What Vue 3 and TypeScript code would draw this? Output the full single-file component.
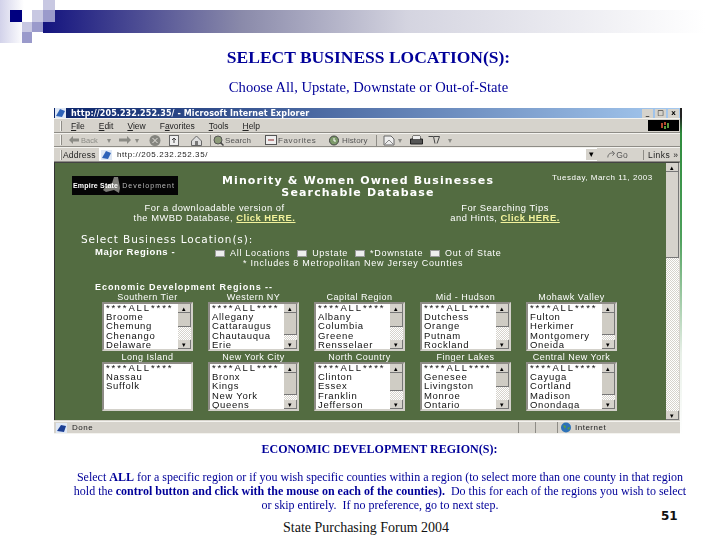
<script setup lang="ts">
interface Region { name: string; items: string[]; thumb: number; scroll: boolean }
const top: Region[] = [
  { name: 'Southern Tier', items: ['Broome', 'Chemung', 'Chenango', 'Delaware'], thumb: 14, scroll: true },
  { name: 'Western NY', items: ['Allegany', 'Cattaraugus', 'Chautauqua', 'Erie'], thumb: 22, scroll: true },
  { name: 'Capital Region', items: ['Albany', 'Columbia', 'Greene', 'Rensselaer'], thumb: 14, scroll: true },
  { name: 'Mid - Hudson', items: ['Dutchess', 'Orange', 'Putnam', 'Rockland'], thumb: 14, scroll: true },
  { name: 'Mohawk Valley', items: ['Fulton', 'Herkimer', 'Montgomery', 'Oneida'], thumb: 22, scroll: true },
]
const bottom: Region[] = [
  { name: 'Long Island', items: ['Nassau', 'Suffolk'], thumb: 0, scroll: false },
  { name: 'New York City', items: ['Bronx', 'Kings', 'New York', 'Queens'], thumb: 22, scroll: true },
  { name: 'North Country', items: ['Clinton', 'Essex', 'Franklin', 'Jefferson'], thumb: 18, scroll: true },
  { name: 'Finger Lakes', items: ['Genesee', 'Livingston', 'Monroe', 'Ontario'], thumb: 14, scroll: true },
  { name: 'Central New York', items: ['Cayuga', 'Cortland', 'Madison', 'Onondaga'], thumb: 22, scroll: true },
]
const rows = [top, bottom]
const menus = [
  ['', 'F', 'ile'], ['', 'E', 'dit'], ['', 'V', 'iew'], ['F', 'a', 'vorites'], ['', 'T', 'ools'], ['', 'H', 'elp'],
]
const checks = ['All Locations', 'Upstate', '*Downstate', 'Out of State']
</script>

<template>
  <div class="slide">
    <div class="fade"></div>
    <div class="band"></div>
    <div class="sq sq1"></div><div class="sq sq2"></div><div class="sq sq3"></div>
    <div class="sq sq4"></div><div class="sq sq5"></div><div class="sq sq6"></div><div class="sq sq7"></div>

    <h1 class="h1">SELECT BUSINESS LOCATION(S):</h1>
    <p class="sub">Choose All, Upstate, Downstate or Out-of-State</p>

    <div class="win">
      <div class="title">
        <svg width="11" height="10" viewBox="0 0 11 10"><rect width="11" height="10" fill="#dfe8f5"/><path d="M1 8 L5 1 L10 3 L7 9 Z" fill="#2d62b8"/></svg>
        <span>http://205.232.252.35/ - Microsoft Internet Explorer</span>
        <div class="btns"><i>_</i><i>&#x25a1;</i><i>x</i></div>
      </div>
      <div class="bar menu">
        <b class="grip"></b>
        <span v-for="m in menus" :key="m[1] + m[2]">{{ m[0] }}<u>{{ m[1] }}</u>{{ m[2] }}</span>
        <div class="xp"><svg width="16" height="9" viewBox="0 0 16 9"><path d="M5 2h2v5H5zM8 1h2v3H8z" fill="#b24a2c"/><path d="M8 5h2v3H8zM11 2h2v5h-2z" fill="#5c9a3c"/></svg></div>
      </div>
      <div class="bar tools">
        <b class="grip"></b>
        <svg class="m7" width="10" height="8" viewBox="0 0 10 8"><path d="M4 0v2.500h6v3H4V8L0 4z" fill="#8b8b85"/></svg>
        <span class="dim m2 w20">Back</span>
        <span class="dim m6 w5">&#x25be;</span>
        <svg class="m7" width="12" height="8" viewBox="0 0 12 8"><path d="M8 0v2.500H0v3h8V8l4-4z" fill="#8b8b85"/></svg>
        <span class="dim m4 w5">&#x25be;</span>
        <svg class="m9" width="12" height="11" viewBox="0 0 12 11"><circle cx="6" cy="5.500" r="5.500" fill="#85857f"/><path d="M3.500 3l5 5M8.500 3l-5 5" stroke="#e4e2dc"/></svg>
        <svg class="m8" width="10" height="11" viewBox="0 0 10 11"><rect x="0.500" y="0.500" width="9" height="10" fill="#eee" stroke="#666"/><path d="M5 8V3M3 5l2-2 2 2" stroke="#444" fill="none"/></svg>
        <svg class="m12" width="11" height="11" viewBox="0 0 11 11"><path d="M.5 6l5-5 5 5v4.500H.5z" fill="#ddd" stroke="#666"/><rect x="4" y="6" width="3" height="4" fill="#777"/></svg>
        <b class="sep m8"></b>
        <svg class="m2" width="11" height="11" viewBox="0 0 11 11"><circle cx="5" cy="5" r="4" fill="#8c9a78" stroke="#555"/><path d="M7.500 7.500l3 3" stroke="#444" stroke-width="1.500"/></svg>
        <span class="lab m1 w25">Search</span>
        <svg class="m15" width="12" height="10" viewBox="0 0 12 10"><rect x="0.500" y="0.500" width="11" height="9" fill="#eee" stroke="#555"/><path d="M3 5h6" stroke="#b88" stroke-width="2"/></svg>
        <span class="lab m1 w37">Favorites</span>
        <svg class="m13" width="12" height="11" viewBox="0 0 12 11"><circle cx="6" cy="5.500" r="4.500" fill="#7d9a6a" stroke="#444"/><path d="M6 3v3h2" stroke="#fff" fill="none"/></svg>
        <span class="lab m2 w26">History</span>
        <b class="sep m8"></b>
        <svg class="m6" width="12" height="11" viewBox="0 0 12 11"><path d="M1 1h7l3 3v6H1z" fill="#eee" stroke="#666"/><path d="M2 9l4-4 4 4" fill="none" stroke="#888"/></svg>
        <span class="dim m3 w5">&#x25be;</span>
        <svg class="m7" width="13" height="10" viewBox="0 0 13 10"><path d="M3 1h7v3h2.500v5H.5V4H3z" fill="#555" stroke="#222"/><rect x="3" y="1" width="7" height="3" fill="#eee"/></svg>
        <svg class="m5" width="12" height="10" viewBox="0 0 12 10"><path d="M.5 1.500h5l1.500 7M6 1.500h5.500L9 8.500" fill="none" stroke="#444"/></svg>
        <span class="dim m8 w5">&#x25be;</span>
      </div>
      <div class="bar addr">
        <b class="grip"></b>
        <span class="m1 w34">Address</span>
        <div class="urlbox">
          <svg width="11" height="10" viewBox="0 0 11 10"><rect width="11" height="10" fill="#dfe8f5"/><path d="M1 8L5 1l5 2-3 6z" fill="#2d62b8"/></svg>
          <em>http://205.232.252.35/</em>
          <i class="drop">&#x25be;</i>
        </div>
        <span class="go"><svg width="11" height="9" viewBox="0 0 11 9"><path d="M1 8c0-4 3-6 7-5M6 .5L9 3 6.500 6" fill="none" stroke="#555"/></svg>Go</span>
        <span class="links">Links &#xbb;</span>
      </div>

      <div class="page">
        <div class="content">
          <div class="head">
            <div class="logo">
              <svg class="ny" width="18" height="19" viewBox="0 0 18 19"><path d="M0 14L4 9 9 7 11 1 15 1 17 12 16 17 11 14 3 16z" fill="#7d7d78"/></svg>
              <strong>Empire State</strong><span>Development</span>
            </div>
            <div class="headline">Minority &amp; Women Owned Businesses<br /><span>Searchable Database</span></div>
            <div class="date">Tuesday, March 11, 2003</div>
          </div>
          <div class="info">
            <p>For a downloadable version of<br />the MWBD Database, <a>Click HERE.</a></p>
            <p>For Searching Tips<br />and Hints, <a>Click HERE.</a></p>
          </div>
          <div class="sel">Select Business Location(s):</div>
          <div class="major">
            <strong>Major Regions -</strong>
            <div class="choices">
              <div class="chk">
                <label v-for="c in checks" :key="c"><i></i>{{ c }}</label>
              </div>
              <div class="note">* Includes 8 Metropolitan New Jersey Counties</div>
            </div>
          </div>
          <div class="eco">Economic Development Regions --</div>
          <div v-for="(row, r) in rows" :key="r" class="grid">
            <div v-for="reg in row" :key="reg.name" class="cell">
              <div class="cap">{{ reg.name }}</div>
              <div class="list">
                <div class="opts">
                  <div class="all">****ALL****</div>
                  <div v-for="it in reg.items" :key="it">{{ it }}</div>
                </div>
                <div v-if="reg.scroll" class="sb">
                  <i class="arrow">&#x25b4;</i>
                  <i class="thumb" :style="{ height: reg.thumb + 'px' }"></i>
                  <i class="track"></i>
                  <i class="arrow">&#x25be;</i>
                </div>
              </div>
            </div>
          </div>
        </div>
        <div class="pagesb">
          <i class="arrow">&#x25b4;</i>
          <i class="pthumb"></i>
          <i class="track"></i>
          <i class="arrow">&#x25be;</i>
        </div>
      </div>

      <div class="status">
        <svg width="11" height="10" viewBox="0 0 11 10"><rect width="11" height="10" fill="#dfe8f5"/><path d="M1 8L5 2l5 1-2 6z" fill="#1c3f94"/></svg>
        <span class="done">Done</span>
        <div class="cells"><b></b><b class="c2"></b><b class="c3"></b>
          <svg width="12" height="11" viewBox="0 0 12 11"><circle cx="6" cy="5.500" r="5" fill="#2d72b8"/><path d="M3 3l3 1-1 3zM7 6l3-1-1 3z" fill="#5aa03c"/></svg>
          <span>Internet</span>
        </div>
      </div>
    </div>

    <h2 class="h2">ECONOMIC DEVELOPMENT REGION(S):</h2>
    <p class="para">
      Select <b>ALL</b> for a specific region or if you wish specific counties within a region (to select more than one county in that region<br />
      hold the <b>control button and click with the mouse on each of the counties).</b>&nbsp; Do this for each of the regions you wish to select<br />
      or skip entirely.&nbsp; If no preference, go to next step.
    </p>
    <div class="foot">State Purchasing Forum 2004</div>
    <div class="num">51</div>
  </div>
</template>

<style>
html, body { margin: 0; background: #fff; }
</style>

<style scoped>
.slide { position: relative; width: 720px; height: 540px; overflow: hidden; background: #fff; font-family: "Liberation Serif", serif; color: #000099; }
.fade { position: absolute; left: 0; top: 0; width: 24px; height: 43px; background: linear-gradient(90deg, #d2d2ea, #fff); }
.band { position: absolute; left: 43px; top: 10px; width: 662px; height: 23px; background: linear-gradient(90deg, #14147f, #8a8aaa 30%, #d4d4e0 55%, #fff); }
.sq { position: absolute; }
.sq1 { left: 10px; top: 10px; width: 12px; height: 12px; background: #000080; }
.sq2 { left: 32px; top: 10px; width: 11px; height: 12px; background: #c8c8e2; }
.sq3 { left: 43px; top: 0; width: 12px; height: 10px; background: #c8c8e2; }
.sq4 { left: 43px; top: 10px; width: 12px; height: 12px; background: #9a9acb; }
.sq5 { left: 22px; top: 22px; width: 10px; height: 10px; background: #c8c8e2; }
.sq6 { left: 32px; top: 22px; width: 11px; height: 10px; background: #9a9acb; }
.sq7 { left: 22px; top: 32px; width: 10px; height: 11px; background: #9a9acb; }

.h1 { margin: 0; padding: 49px 0 0 17px; text-align: center; font-size: 17.500px; line-height: 16px; font-weight: bold; filter: blur(0.3px); }
.sub { margin: 15px 0 0; padding-left: 17px; text-align: center; font-size: 14.600px; line-height: 15px; filter: blur(0.3px); }

.win { margin: 13px 0 0 54px; width: 628px; height: 326px; display: flex; flex-direction: column; background: #d6d3cc; border-right: 2px solid #2e8b3c; border-image: linear-gradient(#222 3%, #2e8b3c 8%, #4ea05c 40%, #e8f0e8 75%, #fff) 1; box-sizing: border-box; font-family: "Liberation Sans", sans-serif; color: #222; font-size: 8px; filter: blur(0.4px); }
.title { height: 10px; flex: none; display: flex; align-items: center; gap: 5px; padding-left: 1px; background: linear-gradient(90deg, #0a246a, #a6caf0); color: #fff; font-family: "DejaVu Sans", sans-serif; font-weight: bold; letter-spacing: 0.100px; white-space: nowrap; }
.btns { margin-left: auto; display: flex; gap: 2px; margin-right: 1px; }
.btns i { width: 11px; height: 9px; background: #d6d3cc; color: #000; font-style: normal; font-size: 7px; line-height: 9px; text-align: center; letter-spacing: 0; }
.bar { display: flex; flex: none; align-items: center; border-top: 1px solid #f4f3ef; border-bottom: 1px solid #8e8c86; box-sizing: border-box; padding-left: 6px; white-space: nowrap; }
.bar > * { flex: none; }
.grip { width: 2px; height: 10px; background: #f4f3ef; border-right: 1px solid #8e8c86; box-sizing: border-box; }
.menu { height: 15px; gap: 14px; font-size: 8.500px; }
.menu .grip { margin-right: -5px; }
.menu u { text-underline-offset: 1px; }
.xp { margin: 0 1px 0 auto; width: 31px; height: 11px; background: #000; display: flex; align-items: center; justify-content: center; }
.tools { height: 14px; }
.m1 { margin-left: 1px; } .m2 { margin-left: 2px; } .m3 { margin-left: 3px; } .m4 { margin-left: 4px; }
.m5 { margin-left: 5px; } .m6 { margin-left: 6px; } .m7 { margin-left: 7px; } .m8 { margin-left: 8px; }
.m9 { margin-left: 9px; } .m12 { margin-left: 12px; } .m13 { margin-left: 13px; } .m15 { margin-left: 15px; }
.w5 { width: 5px; } .w20 { width: 20px; } .w25 { width: 25px; } .w26 { width: 26px; } .w34 { width: 34px; } .w37 { width: 37px; }
.dim { color: #8b8b85; font-size: 7.500px; }
.lab { color: #555; letter-spacing: 0.100px; }
.lab.w37 { letter-spacing: 0.600px; }
.sep { width: 1px; height: 11px; background: #8e8c86; }
.addr { height: 15px; font-size: 8.500px; letter-spacing: 0.200px; }
.urlbox { margin-left: 2px; width: 498px; height: 13px; background: #fff; display: flex; align-items: center; gap: 5px; padding-left: 2px; box-sizing: border-box; }
.urlbox em { font-style: normal; font-size: 8px; letter-spacing: 0.600px; }
.drop { margin-left: auto; width: 11px; height: 11px; background: #d6d3cc; font-style: normal; text-align: center; line-height: 11px; color: #000; letter-spacing: 0; }
.go { margin-left: 10px; width: 21px; color: #555; display: flex; align-items: center; }
.links { margin-left: 15px; padding-left: 4px; border-left: 1px solid #8e8c86; letter-spacing: 0.500px; }

.page { flex: 1; min-height: 0; display: flex; background: #536c41; color: #fff; border-left: 1px solid #333; border-right: 1px solid #d6d3cc; border-top: 1px solid #444; }
.content { flex: 1; min-width: 0; font-size: 9.500px; letter-spacing: 0.500px; }
.head { position: relative; height: 37px; padding: 13px 0 0 17px; box-sizing: border-box; display: flex; }
.logo { position: relative; width: 106px; height: 19px; background: #050505; display: flex; align-items: center; font-size: 7px; letter-spacing: 0; overflow: hidden; flex: none; }
.ny { position: absolute; left: 31px; top: 0; }
.logo strong { position: relative; color: #fff; padding-left: 1px; letter-spacing: 0.200px; }
.logo span { position: relative; color: #bbb; padding-left: 4px; letter-spacing: 1.050px; }
.headline { width: 328px; margin-left: 16px; text-align: center; margin-top: -1px; font-family: "DejaVu Sans", sans-serif; font-weight: bold; font-size: 11px; line-height: 12px; letter-spacing: 1.150px; white-space: nowrap; }
.date { position: absolute; left: 497px; top: 10px; font-size: 8px; white-space: nowrap; }
.info { display: flex; margin-top: 3px; }
.info p { margin: 0; text-align: center; line-height: 9.500px; font-size: 9.400px; white-space: nowrap; }
.info p:first-child { margin-left: 67px; width: 185px; }
.info p:last-child { margin-left: 132px; width: 132px; }
.info a { color: #f2f29c; font-weight: bold; text-decoration: underline; }
.sel { margin: 11px 0 0 26px; font-family: "DejaVu Sans", sans-serif; font-size: 10.500px; line-height: 12px; font-weight: 400; letter-spacing: 0.900px; }
.major { display: flex; padding-left: 40px; margin-top: 2px; }
.major strong { font-size: 9.500px; line-height: 10px; width: 120px; letter-spacing: 0.600px; flex: none; }
.choices { flex: 1; }
.chk { display: flex; gap: 7px; align-items: center; height: 10px; font-size: 9px; margin-top: 1px; letter-spacing: 0.700px; white-space: nowrap; }
.chk label { display: flex; align-items: center; gap: 5px; }
.chk i { width: 8px; height: 5px; background: #eee; border: 1px solid #999; }
.note { padding-left: 28px; font-size: 9px; line-height: 10px; letter-spacing: 0.750px; white-space: nowrap; }
.eco { margin: 14px 0 0 40px; font-weight: bold; font-size: 9px; line-height: 10px; letter-spacing: 0.950px; white-space: nowrap; }
.grid { display: grid; grid-template-columns: repeat(5, 91px); column-gap: 15px; padding-left: 47px; }
.grid + .grid { margin-top: 1px; }
.cell { display: flex; flex-direction: column; }
.cap { text-align: center; font-size: 9px; line-height: 10px; height: 10px; white-space: nowrap; }
.list { height: 49px; display: flex; background: #fff; color: #111; border: 2px solid #d3d1ca; border-top-color: #8e8c86; border-left-color: #8e8c86; box-sizing: border-box; overflow: hidden; font-size: 9.500px; line-height: 9.200px; letter-spacing: 0.700px; }
.opts { flex: 1; min-width: 0; padding-left: 2px; white-space: nowrap; }
.all { margin-top: -1px; letter-spacing: 1.900px; }
.sb { width: 13px; display: flex; flex-direction: column; flex: none; }
.sb i, .pagesb i { display: block; font-style: normal; }
.arrow { height: 9px; flex: none; background: #d6d3cc; color: #000; font-size: 7px; line-height: 9px; text-align: center; letter-spacing: 0; border-right: 1px solid #777; border-bottom: 1px solid #777; box-sizing: border-box; }
.thumb { flex: none; background: #cfccc4; border-right: 1px solid #777; border-bottom: 1px solid #777; box-sizing: border-box; }
.track { flex: 1; background: repeating-conic-gradient(#fff 0 25%, #d6d3cc 0 50%) 0 0 / 2px 2px; }
.pagesb { width: 13px; flex: none; display: flex; flex-direction: column; }
.pthumb { height: 86px; flex: none; background: #d6d3cc; border-right: 1px solid #777; border-bottom: 1px solid #777; box-sizing: border-box; }

.status { height: 13px; margin-top: 1px; flex: none; display: flex; align-items: center; padding-left: 2px; border-top: 1px solid #f4f3ef; border-bottom: 1px solid #f4f3ef; box-sizing: border-box; }
.done { margin-left: 5px; letter-spacing: 0.500px; }
.cells { margin-left: auto; width: 162px; display: flex; align-items: center; letter-spacing: 0.500px; }
.cells b { width: 1px; height: 11px; background: #8e8c86; flex: none; }
.cells .c2 { margin-left: 16px; }
.cells .c3 { margin-left: 21px; }
.cells svg { margin-left: 2px; }
.cells span { margin-left: 3px; }

.h2 { margin: 8px 0 0; padding-left: 39px; text-align: center; font-size: 12px; line-height: 14px; filter: blur(0.3px); }
.para { margin: 14px 0 0; text-align: center; padding-left: 40px; font-size: 12px; line-height: 14px; white-space: nowrap; filter: blur(0.3px); }
.foot { position: absolute; left: 283px; top: 519px; font-size: 14px; line-height: 17px; color: #111; }
.num { position: absolute; left: 661px; top: 510px; font-family: "DejaVu Sans", sans-serif; font-weight: bold; font-size: 12px; line-height: 13px; color: #111; }
</style>
